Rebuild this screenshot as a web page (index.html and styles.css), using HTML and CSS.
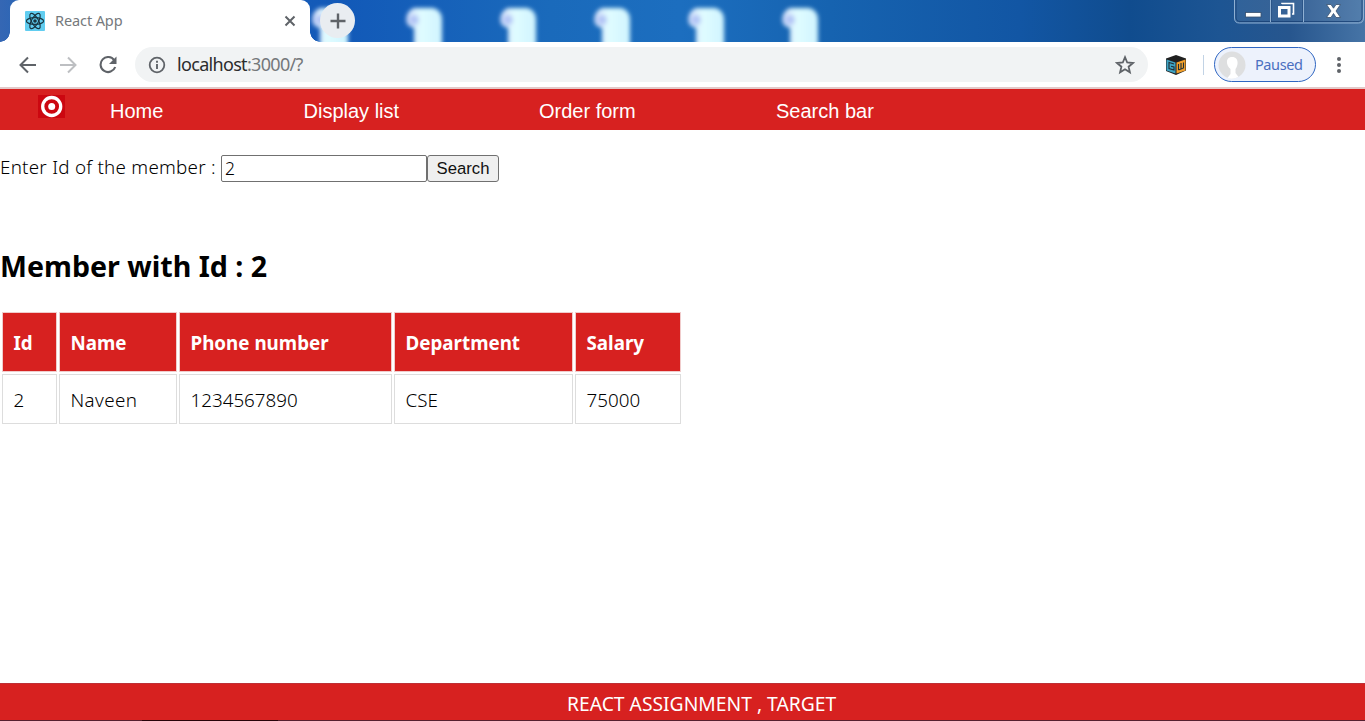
FILE: index.html
```html
<!DOCTYPE html>
<html lang="en">
<head>
<meta charset="utf-8">
<title>React App</title>
<link rel="stylesheet" href="styles.css">
</head>
<body>
<div class="window">
  <div class="tabstrip">
    <svg class="wallpaper" width="1365" height="42" viewBox="0 0 1365 42">
      <defs>
        <filter id="soft" x="-40%" y="-30%" width="180%" height="160%"><feGaussianBlur stdDeviation="2.1"/></filter>
        <linearGradient id="paper" x2="1" y2="0"><stop offset="0" stop-color="#d2dcfb"/><stop offset=".4" stop-color="#e0fcff"/><stop offset="1" stop-color="#d0f4ff"/></linearGradient>
        <g id="scroll" filter="url(#soft)">
          <path fill="url(#paper)" d="M8 8h19q9 2 9 12v34H8V28Q-2 26 1 15 3 10 8 8z"/>
          <ellipse cx="8" cy="20" rx="5" ry="5" fill="#b4c6f6"/>
        </g>
      </defs>
      <use href="#scroll" x="312"/><use href="#scroll" x="406"/><use href="#scroll" x="500"/><use href="#scroll" x="594"/><use href="#scroll" x="688"/><use href="#scroll" x="782"/>
    </svg>
    <div class="tab">
      <svg class="react" width="20" height="20" viewBox="0 0 20 20">
        <rect width="20" height="20" rx="1" fill="#61cdf0"/>
        <g fill="none" stroke="#18343f" stroke-width="1.15">
          <ellipse cx="10" cy="10" rx="8.6" ry="3.4"/>
          <ellipse cx="10" cy="10" rx="8.6" ry="3.4" transform="rotate(60 10 10)"/>
          <ellipse cx="10" cy="10" rx="8.6" ry="3.4" transform="rotate(120 10 10)"/>
        </g>
        <circle cx="10" cy="10" r="1.8" fill="#18343f"/>
      </svg>
      <span class="tab-title">React App</span>
      <svg class="close" width="12" height="12" viewBox="0 0 12 12"><path d="M1.5 1.5l9 9M10.5 1.5l-9 9" stroke="#5f6368" stroke-width="2"/></svg>
    </div>
    <div class="newtab"><svg width="16" height="16" viewBox="0 0 16 16"><path d="M8 .5v15M.5 8h15" stroke="#5f6368" stroke-width="2.4"/></svg></div>
    <svg class="controls" width="131" height="25" viewBox="0 0 131 25">
      <path d="M.5-1v19q0 5 5 5h119q5 0 5-5V-1" fill="#ffffff14" stroke="#8fb0d3"/>
      <path d="M2-1v18q0 4.500 4 4.500h118q4 0 4-4.500V-1" fill="none" stroke="#173f73" stroke-width=".8"/>
      <path d="M36.500 0v22M69.500 0v22" stroke="#8fb0d3"/>
      <path d="M37.500 0v21M68.500 0v21" stroke="#2b5588"/>
      <rect x="11.500" y="12.500" width="15.500" height="4.500" fill="#fff" stroke="#38506e" stroke-width=".8"/>
      <path d="M48 4V3.500h11.500V14H58" fill="none" stroke="#fff" stroke-width="1.600"/>
      <rect x="45.500" y="7.500" width="9.500" height="8.500" fill="none" stroke="#fff" stroke-width="3"/>
      <path d="M92.500 4.500H97l2.500 3.700 2.500-3.700h4.500L102 11l4.500 6.500H102l-2.500-4-2.500 4h-4.500L97 11z" fill="#fff" stroke="#38506e" stroke-width=".8"/>
    </svg>
  </div>

  <div class="toolbar">
    <svg class="back" width="18" height="18" viewBox="0 0 18 18"><path d="M17 9H2M9 1.500L1.500 9 9 16.500" fill="none" stroke="#5f6368" stroke-width="2"/></svg>
    <svg class="forward" width="18" height="18" viewBox="0 0 18 18"><path d="M1 9h15M9 1.500L16.500 9 9 16.500" fill="none" stroke="#bdbfc2" stroke-width="2"/></svg>
    <svg class="reload" width="18" height="18" viewBox="0 0 18 18"><path d="M15.300 4.300A7.500 7.500 0 1 0 16.200 11" fill="none" stroke="#5f6368" stroke-width="2.100"/><path d="M17.500.5v7.600H10z" fill="#5f6368"/></svg>
    <div class="omnibox">
      <svg class="info" width="18" height="18" viewBox="0 0 18 18"><circle cx="9" cy="9" r="7.300" fill="none" stroke="#5f6368" stroke-width="1.800"/><path d="M9 8v5M9 4.800v1.900" stroke="#5f6368" stroke-width="1.900"/></svg>
      <span class="url"><span class="host">localhost</span>:3000/?</span>
      <svg class="star" width="20" height="20" viewBox="0 0 20 20"><path d="M10 2.200l2.200 5.300 5.700.5-4.300 3.700 1.300 5.600-4.900-3-4.900 3 1.300-5.600L2.100 8l5.700-.5z" fill="none" stroke="#5f6368" stroke-width="1.800"/></svg>
    </div>
    <svg class="cube" width="22" height="22" viewBox="0 0 22 22">
      <path fill="#202020" d="M11 1l10 3.500v12L11 21 1 17V4.500z"/>
      <path fill="#3fa4c4" d="M1.500 5.500l9 3v11l-9-3z"/>
      <path fill="#f2a02c" d="M11.500 8.500l9-3v11l-9 3z"/>
      <path fill="none" stroke="#203038" stroke-width="1.100" d="M9 10L4 8.500v6L9 16v-3l-3-.8M13.500 10v6M16 9v5.500M18.500 8.500v5.500l-5 2"/>
    </svg>
    <span class="divider"></span>
    <div class="profile">
      <svg width="28" height="28" viewBox="0 0 28 28"><circle cx="14" cy="14" r="13.500" fill="#dedfe0"/><path fill="#fff" d="M14 6c7 0 6.500 8 3.500 12v4l3 4q-6 3-11 1l3-4v-5C7.500 14 7.500 6 14 6z"/></svg>
      <span>Paused</span>
    </div>
    <svg class="dots" width="6" height="18" viewBox="0 0 6 18" fill="#5f6368"><circle cx="3" cy="3" r="2"/><circle cx="3" cy="9" r="2"/><circle cx="3" cy="15" r="2"/></svg>
  </div>

  <nav class="nav">
    <svg class="logo" width="27" height="23" viewBox="0 0 27 23"><rect width="27" height="23" fill="#cc0710"/><circle cx="13.700" cy="11.500" r="9" fill="none" stroke="#fff" stroke-width="3.300"/><circle cx="13.700" cy="11.500" r="3.500" fill="#fff"/></svg>
    <a class="link-home">Home</a><a class="link-list">Display list</a><a class="link-order">Order form</a><a class="link-search">Search bar</a>
  </nav>

  <main class="content">
    <form class="search">
      <label for="member">Enter Id of the member :</label>
      <input id="member" type="text" value="2"><button type="button">Search</button>
    </form>
    <h2><span>Member with Id : 2</span></h2>
    <table class="members">
      <colgroup><col class="c-id"><col class="c-name"><col class="c-phone"><col class="c-dept"><col class="c-salary"></colgroup>
      <tr><th>Id</th><th>Name</th><th>Phone number</th><th>Department</th><th>Salary</th></tr>
      <tr><td>2</td><td class="name">Naveen</td><td>1234567890</td><td>CSE</td><td>75000</td></tr>
    </table>
  </main>
  <footer class="footer"><span>REACT ASSIGNMENT , TARGET</span></footer>
  <div class="taskbar"></div>
</div>
</body>
</html>
```
FILE: styles.css
```css
* { box-sizing: border-box; }
body { margin: 0; overflow: hidden; font-family: "Noto Sans", sans-serif; color: #111; background: #fff; }
svg { display: block; flex: none; }
.window { display: flex; flex-direction: column; height: 721px; }

.tabstrip { position: relative; display: flex; flex: none; height: 42px; padding-left: 10px; overflow: hidden;
  background: linear-gradient(90deg, #3567b4 0, #2b66b6 20px, #1259b8 340px, #1a6abb 550px, #1c6ebf 680px, #1663b0 830px, #1256a4 1020px, #104c8e 1130px, #1d5593 1220px, #27568e 1290px, #4674a6 1365px); }
.wallpaper { position: absolute; left: 0; top: 0; }
.tab { position: relative; display: flex; align-items: center; width: 300px; height: 42px; padding: 0 14px 0 15px; background: #fff; border-radius: 9px 9px 0 0; }
.tab::before, .tab::after { content: ""; position: absolute; bottom: 0; width: 10px; height: 10px; }
.tab::before { left: -10px; background: radial-gradient(circle at 0 0, transparent 9.5px, #fff 10px); }
.tab::after { right: -10px; background: radial-gradient(circle at 100% 0, transparent 9.5px, #fff 10px); }
.tab-title { margin-left: 10px; padding-bottom: 2px; font-size: 14.5px; letter-spacing: -.1px; color: #75797c; }
.close { margin-left: auto; }
.newtab { position: relative; display: flex; align-items: center; justify-content: center; width: 35px; height: 35px; margin: 3px 0 0 10px; border-radius: 50%; background: #e9edf1; }
.controls { position: relative; margin-left: auto; }

.toolbar { display: flex; align-items: center; flex: none; height: 47px; padding: 0 0 0 19px; background: #fff; border-bottom: 2px solid #e3c9c9; }
.forward { margin-left: 22px; }
.reload { margin-left: 22px; }
.omnibox { display: flex; align-items: center; width: 1013px; height: 35px; margin-left: 18px; padding: 0 13px 0 13px; border-radius: 18px; background: #f1f3f4; }
.url { margin-left: 11px; padding-bottom: 1px; font-size: 18px; letter-spacing: -.68px; color: #75787b; }
.host { color: #2c2c2c; }
.star { margin-left: auto; }
.cube { margin-left: 17px; }
.divider { width: 1px; height: 20px; margin-left: 16px; background: #c2d3e5; }
.profile { display: flex; align-items: center; width: 102px; height: 35px; margin-left: 10px; padding-left: 3px; border: 1.5px solid #2f66c2; border-radius: 18px; background: #edf2fc; color: #4a6fc0; font-size: 14.5px; }
.profile span { margin-left: 9px; padding-bottom: 1px; letter-spacing: -.4px; }
.dots { margin-left: 20px; }

.nav { display: flex; flex: none; height: 41px; padding-left: 38px; background: #d72120; color: #fff; font: 20px/45px "Liberation Sans", Arial, sans-serif; }
.logo { margin-top: 6px; }
.nav a { height: 41px; white-space: nowrap; }
.link-home { width: 193.500px; margin-left: 45px; }
.link-list { width: 235.500px; }
.link-order { width: 237px; }

.content { flex: 1; font-size: 18.8px; font-weight: 300; color: #000; }
.search { display: flex; height: 27px; margin-top: 25px; line-height: 24px; }
.search label { width: 221px; letter-spacing: .26px; white-space: nowrap; }
.search input { width: 206px; height: 27px; padding: 0 3px 2px; border: 1px solid #707070; border-radius: 2px; color: #000; background: #fff; font: 300 17.500px "Noto Sans", sans-serif; }
.search button { width: 72px; height: 27px; padding: 0; border: 1px solid #707070; border-radius: 3px; color: #111; background: #efefef; font: 16.700px "Liberation Sans", Arial, sans-serif; }
h2 { margin: 65px 0 0; height: 38px; font-size: 28.6px; line-height: 38px; color: #000; white-space: nowrap; }
.members { width: 683px; margin-top: 25px; table-layout: fixed; border-collapse: separate; border-spacing: 2px; }
.c-id { width: 55px; } .c-name { width: 118px; } .c-phone { width: 213px; } .c-dept { width: 179px; } .c-salary { width: 106px; }
.members th, .members td { padding: 1px 0 0 10.500px; border: 1px solid #ddd; text-align: left; white-space: nowrap; }
.members th { height: 60px; border-color: #f0cccc; background: #d72120; color: #fff; }
.members td { height: 50px; }
.members .name { letter-spacing: .4px; }

.footer { flex: none; height: 37px; padding-left: 567px; background: #d72120; border-top: 1px solid #bd3036; color: #fff; font-size: 19.300px; line-height: 40px; white-space: nowrap; }
.taskbar { flex: none; height: 1px; background: linear-gradient(90deg, #562030 142px, #280309 142px 278px, #562030 278px); }
```
